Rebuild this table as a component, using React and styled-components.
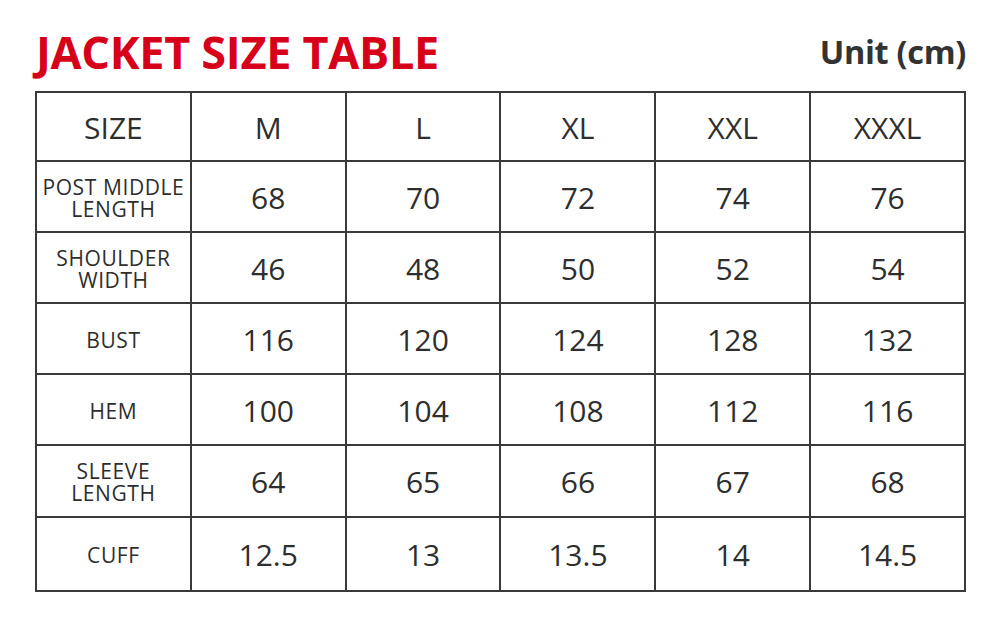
import React from 'react';
import styled, { createGlobalStyle } from 'styled-components';

const GlobalStyle = createGlobalStyle`
    html, body {
        margin: 0;
        padding: 0;
        background: #ffffff;
    }
    body {
        font-family: 'Open Sans', 'Liberation Sans', sans-serif;
        color: #333333;
    }
`

const Page = styled.div`
    width: 1000px;
    height: 634px;
    box-sizing: border-box;
    padding: 21px 34px 0 35px;
    display: flex;
    flex-flow: column nowrap;
`

const TitleBar = styled.div`
    display: flex;
    justify-content: space-between;
    align-items: center;
    height: 60px;
    margin-bottom: 10px;
`

const Title = styled.h1`
    margin: 0 0 0 1px;
    font-size: 45px;
    font-weight: 700;
    color: #d7001a;
    letter-spacing: -0.3px;
`

const Unit = styled.span`
    font-size: 32.5px;
    font-weight: 700;
    color: #333333;
    letter-spacing: -0.3px;
`

const Table = styled.table`
    width: 931px;
    border-collapse: collapse;
    table-layout: fixed;
`

const Cell = styled.td`
    border: 2px solid #3a3a3a;
    text-align: center;
    vertical-align: middle;
    height: ${props => props.$h}px;
    padding: 2px 0 0;
    font-size: ${props => props.$label ? '21px' : '30px'};
    line-height: ${props => props.$label ? '22px' : '1'};
    letter-spacing: ${props => props.$label ? '0.6px' : '0'};
    color: #2e2e2e;
`

const Head = styled(Cell).attrs({ as: 'th' })`
    font-weight: 400;
    font-size: 30px;
`

const sizes = ['M', 'L', 'XL', 'XXL', 'XXXL'];

const rows = [
    { label: ['POST MIDDLE', 'LENGTH'], values: ['68', '70', '72', '74', '76'], h: 67 },
    { label: ['SHOULDER', 'WIDTH'], values: ['46', '48', '50', '52', '54'], h: 67 },
    { label: ['BUST'], values: ['116', '120', '124', '128', '132'], h: 67 },
    { label: ['HEM'], values: ['100', '104', '108', '112', '116'], h: 67 },
    { label: ['SLEEVE', 'LENGTH'], values: ['64', '65', '66', '67', '68'], h: 68 },
    { label: ['CUFF'], values: ['12.5', '13', '13.5', '14', '14.5'], h: 70 },
];

export default function App() {
    return (
        <>
            <GlobalStyle />
            <Page>
                <TitleBar>
                    <Title>JACKET SIZE TABLE</Title>
                    <Unit>Unit (cm)</Unit>
                </TitleBar>
                <Table>
                    <thead>
                        <tr>
                            <Head $h={65}>SIZE</Head>
                            {sizes.map(s => <Head key={s} $h={65}>{s}</Head>)}
                        </tr>
                    </thead>
                    <tbody>
                        {rows.map((row, i) => (
                            <tr key={i}>
                                <Cell $label $h={row.h}>
                                    {row.label.map((l, j) => <div key={j}>{l}</div>)}
                                </Cell>
                                {row.values.map((v, j) => (
                                    <Cell key={j} $h={row.h}>{v}</Cell>
                                ))}
                            </tr>
                        ))}
                    </tbody>
                </Table>
            </Page>
        </>
    )
}
